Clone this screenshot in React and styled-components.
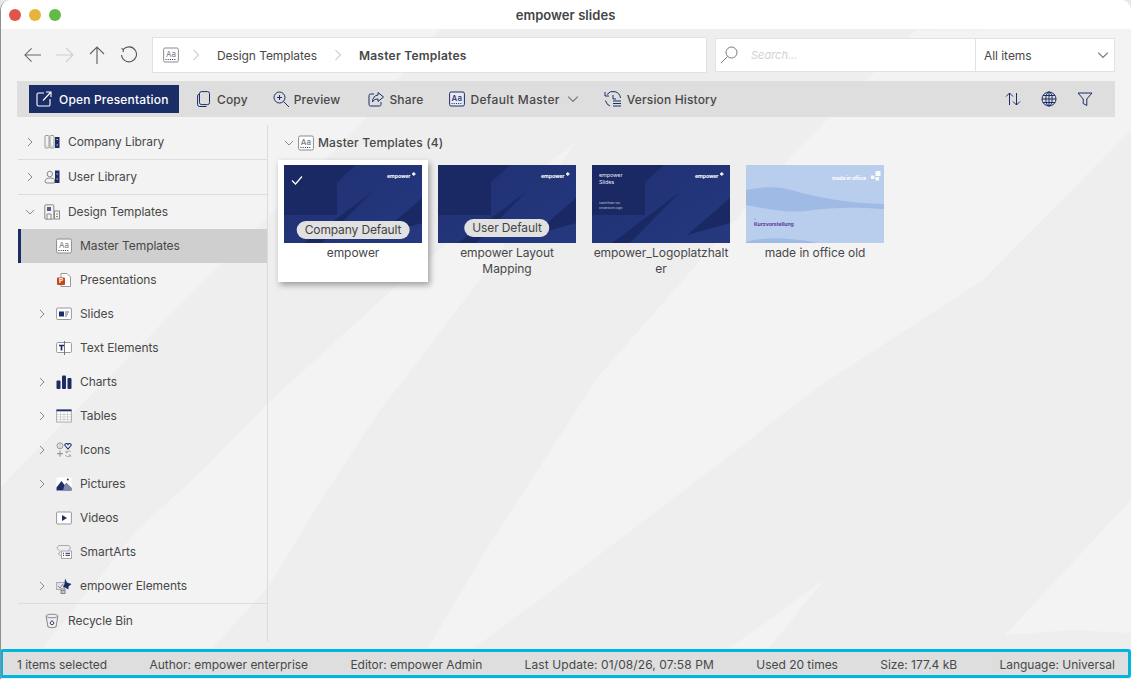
import React from "react";
import styled, { createGlobalStyle } from "styled-components";

const Global = createGlobalStyle`
  html, body { margin: 0; padding: 0; background: #e8e6e6; }
  * { box-sizing: border-box; }
  body { font-family: Inter, "Noto Sans", "Liberation Sans", sans-serif; font-size: 12px; color: #444; overflow: hidden; }
`;

const NAVY = "#1b2d66";

const Win = styled.div`
  position: relative; width: 1131px; height: 679px; display: flex; flex-direction: column;
  overflow: hidden; background: #eeeeee; border-radius: 10px 10px 0 0; border-left: 1px solid #8f8f8f;
`;
const Backdrop = styled.svg`position: absolute; left: -1px; top: 0; width: 1131px; height: 679px; pointer-events: none;`;
const TitleBar = styled.div`
  position: relative; height: 29px; flex: none; background: #fff; display: flex; align-items: center; justify-content: center;
  font-weight: 600; font-size: 13px; letter-spacing: 0.05px; color: #444; padding-right: 1px;
`;
const Lights = styled.div`position: absolute; left: 8px; top: 9px; display: flex; gap: 8px;`;
const Light = styled.span`width: 12px; height: 12px; border-radius: 50%; background: ${p => p.$c};`;

const NavRow = styled.div`position: relative; height: 52px; flex: none; display: flex; align-items: flex-start; padding: 8px 16px 0 23px;`;
const NavIcons = styled.div`width: 128px; height: 36px; flex: none; display: flex; align-items: center; gap: 15px;`;
const Crumbs = styled.div`
  width: 555px; height: 36px; flex: none; background: #fff; border: 1px solid #e2e2e2; display: flex; align-items: center; padding-left: 10px;
`;
const CrumbSep = styled.svg`width: 8px; height: 12px; margin: 0 ${p => p.$r}px 0 ${p => p.$l}px; flex: none;`;
const Crumb = styled.span`font-weight: ${p => p.$bold ? 600 : 400}; color: #484848; letter-spacing: ${p => p.$bold ? "0.25px" : "-0.08px"};`;
const SearchBox = styled.div`
  width: 400px; height: 34px; margin: 1px 0 0 8px; flex: none; background: #fff; border: 1px solid #e2e2e2; display: flex; align-items: center;
`;
const SearchIcon = styled.svg`width: 18px; height: 18px; margin-left: 4px; flex: none;`;
const SearchInput = styled.span`width: 237px; padding-left: 13px; font-style: italic; color: #d2d2d2; font-size: 11px;`;
const Select = styled.div`
  flex: 1; height: 100%; border-left: 1px solid #e2e2e2; display: flex; align-items: center; justify-content: space-between; padding: 0 5px 0 8px; color: #484848; letter-spacing: -0.05px;
`;

const Toolbar = styled.div`
  position: relative; height: 36px; margin: 0 16px 8px 16px; flex: none; background: #dedede; display: flex; align-items: center; padding: 0 22px 0 12px; gap: 26px;
`;
const PrimaryBtn = styled.button`
  width: 150px; height: 28px; margin-right: -8px; border: 0; border-radius: 0; background: ${NAVY}; color: #fff; font: 500 12px Inter, sans-serif; letter-spacing: 0.18px;
  display: flex; align-items: center; gap: 7px; padding: 0 0 0 7px;
`;
const ToolItem = styled.div`
  display: flex; align-items: center; gap: ${p => p.$gap || 5}px; margin-left: ${p => p.$ml || 0}px;
  font-weight: 500; color: #484848; letter-spacing: ${p => p.$ls || 0.15}px;
`;
const ToolChevron = styled.span`display: flex; margin-left: 2px;`;
const Spacer = styled.div`flex: 1;`;
const ToolIcons = styled.div`display: flex; gap: 20px; align-items: center;`;

const Body = styled.div`position: relative; flex: 1; min-height: 0; display: flex; padding-left: 16px;`;
const Sidebar = styled.nav`width: 251px; flex: none; height: 517px; border-right: 1px solid #dcdcdc;`;
const Row = styled.div`
  height: ${p => p.$h || 34}px; display: flex; align-items: center; padding-left: ${p => p.$nested ? 19 : 7}px; margin-left: 1px;
  background: ${p => p.$selected ? "#cfcfcf" : "transparent"};
  box-shadow: ${p => p.$selected ? `inset 3px 0 0 ${NAVY}` : "none"};
  border-bottom: ${p => p.$divider ? "1px solid #dcdcdc" : "0"};
  color: #484848; letter-spacing: -0.08px;
`;
const RowLabel = styled.span`margin-bottom: 2px;`;
const ChevronSlot = styled.span`width: 10px; flex: none; display: flex; justify-content: center; margin-right: 9px;`;
const IconSlot = styled.span`width: 16px; height: 16px; flex: none; margin-right: 8px; display: flex;`;

const Main = styled.main`flex: 1; min-width: 0; padding-left: 10px;`;
const GroupHead = styled.div`height: 35px; display: flex; align-items: center; padding: 0 0 0 6px; gap: 4px; font-weight: 500; color: #484848; letter-spacing: 0.15px;`;
const Cards = styled.div`display: flex; gap: 4px; align-items: flex-start;`;
const Card = styled.div`
  width: 150px; height: 122px; padding: 5px 6px 0; text-align: center; color: #484848; line-height: 16px; overflow-wrap: anywhere; letter-spacing: -0.05px;
  background: ${p => p.$selected ? "#fff" : "transparent"};
  box-shadow: ${p => p.$selected ? "2px 3px 6px rgba(0,0,0,.35)" : "none"};
`;
const Thumb = styled.div`position: relative; width: 138px; height: 78px; margin-bottom: 2px;`;
const ThumbArt = styled.svg`display: block; width: 138px; height: 78px;`;
const Badge = styled.span`
  position: absolute; left: 50%; bottom: ${p => p.$b}px; transform: translateX(-50%); height: 18px; line-height: 18px; padding: 0 8px;
  white-space: nowrap; border-radius: 9px; background: #e1e1e1; color: #444; letter-spacing: -0.12px;
`;
const Tick = styled.svg`position: absolute; left: 7px; top: 9px; width: 12px; height: 12px;`;

const Status = styled.footer`
  position: relative; height: 29px; flex: none; margin: 0 0 1px -1px; border: 3px solid #00b5df; border-radius: 3px; background: #dedede;
  display: flex; align-items: center; justify-content: space-between; padding: 1px 13px 0 14px; color: #484848; letter-spacing: -0.02px;
`;
const StatusWide = styled.span`letter-spacing: 0.1px;`;

const Chev = ({ open, color = "#8a8a8a", size = 10 }) => (
  <svg width={size} height={size} viewBox="0 0 10 10" fill="none" stroke={color} strokeWidth="1">
    <path d={open ? "M1 3l4 4 4-4" : "M3 1l4 4-4 4"} />
  </svg>
);

const Aa = ({ size = 16, navy }) => (
  <svg width={size} height={size} viewBox="0 0 16 16" fill="none">
    <rect x=".6" y="1" width="14.8" height="14" rx="1.5" stroke={navy ? NAVY : "#8b8b8b"} fill={navy ? "#e8ebf5" : "#fff"} />
    <text x="8" y="9.6" fontSize="8" textAnchor="middle" fill={navy ? NAVY : "#777"} fontFamily="Inter, sans-serif">Aa</text>
    <path d="M2.5 12.5h11" stroke={NAVY} strokeWidth="1.2" strokeDasharray="1 1.2" />
  </svg>
);

const Sv = ({ children, w = 16, h = 16, vb, ...r }) => (
  <svg width={w} height={h} viewBox={vb || `0 0 ${w} ${h}`} fill="none" {...r}>{children}</svg>
);

const icons = {
  company: <Sv><rect x="1" y="1.5" width="4" height="12.5" rx=".8" stroke="#999" /><rect x="6" y="1.5" width="4" height="12.5" rx=".8" stroke="#999" /><rect x="11" y="3" width="4.5" height="11" fill={NAVY} /><path d="M12.5 5.5h1.5M12.5 11h1.5M2 12h2M7 12h2" stroke="#ccd" /></Sv>,
  user: <Sv><circle cx="5.8" cy="5" r="2.7" stroke="#888" /><path d="M1 13c0-3 2-4 5-4s4 1 4.5 1.500V14H2z" stroke="#888" /><rect x="11" y="1.5" width="4.5" height="12.5" fill={NAVY} /><path d="M12.5 5h1.5M12.5 10h1.5" stroke="#ccd" /></Sv>,
  design: <Sv><rect x=".8" y=".8" width="9" height="14.4" rx="1" stroke="#888" /><rect x="3" y="3" width="4" height="4" fill={NAVY} opacity=".75" /><path d="M3 15v-5h4v5" stroke="#888" /><rect x="10.5" y="7" width="5" height="8" stroke="#888" /><path d="M12 10h2M12 12.500h2" stroke="#888" /></Sv>,
  ppt: <Sv><path d="M5 1.5h6l3.500 3.500v9.500H5z" fill="#fff" stroke="#999" /><rect x="1" y="5.5" width="8" height="7.5" rx="1" fill="#c4471d" /><text x="5" y="11.4" fontSize="6.5" fontWeight="700" fill="#fff" textAnchor="middle" fontFamily="Inter, sans-serif">P</text></Sv>,
  slides: <Sv><rect x=".6" y="2" width="14.8" height="11.5" rx="1" stroke="#999" fill="#fff" /><rect x="3" y="5.5" width="5" height="5" fill={NAVY} /><path d="M9 6h4M9 8h3M9 10h2" stroke="#668" /></Sv>,
  text: <Sv><rect x=".6" y="2.5" width="14.8" height="10" rx="1" stroke="#999" fill="#fff" /><path d="M3 5.5h5M5.500 5.5V10.5" stroke={NAVY} strokeWidth="1.7" /><path d="M8.5 1v14" stroke="#777" /></Sv>,
  charts: <Sv><rect x=".5" y="6.5" width="4" height="8.5" rx="1" fill={NAVY} /><rect x="6" y="1.5" width="4" height="13.5" rx="1" fill={NAVY} /><rect x="11.5" y="4" width="4" height="11" rx="1" fill={NAVY} /></Sv>,
  tables: <Sv><rect x=".6" y="2" width="14.8" height="12" stroke="#aaa" fill="#fff" /><rect x=".5" y="1.5" width="15" height="1.8" fill={NAVY} /><path d="M1 6.500h14M1 9h14M1 11.500h14M4.500 3.500v10M8 3.500v10M11.500 3.500v10" stroke="#c5c5c5" strokeWidth=".7" /></Sv>,
  icons: <Sv><circle cx="4" cy="3.8" r="3" stroke="#999" /><path d="M2.700 4.800q1.300 1 2.600 0M2.600 3h2.800" stroke="#999" strokeWidth=".6" /><path d="M12 7l-3-3.500c-1-1.500 2-3 3-1 1-2 4-.500 3 1z" stroke={NAVY} strokeWidth="1.1" /><path d="M1 11.700h6M4 8.700v6" stroke="#888" /><path d="M15 10a3 3 0 0 0-5 .500M9.200 13a3 3 0 0 0 5 .500M10 8.700v2h2M14.500 15v-2h-2" stroke="#999" strokeWidth=".8" /></Sv>,
  pictures: <Sv><rect x=".5" y="1.5" width="15" height="13" rx="1" fill="#fff" /><path d="M.5 14.500v-3L5.500 5l3 4 2-2 5 5v2.500z" fill={NAVY} /><path d="M8.500 9l2-2 5 5v2.500H7z" fill="#8089ad" /><circle cx="11.800" cy="3.500" r="1" fill={NAVY} /></Sv>,
  videos: <Sv><rect x=".6" y="2" width="14.8" height="12" rx="1" stroke="#999" fill="#fff" /><path d="M6 5l5 3-5 3z" fill={NAVY} /></Sv>,
  smart: <Sv><path d="M.8 4l2-2.500h10l2 2.500-3 2.500" stroke="#aaa" /><path d="M.8 4l3.500 3.500-2 2.500 3 2" stroke="#aaa" /><rect x="5.5" y="7" width="10" height="7.5" fill="#fff" stroke="#aaa" /><path d="M7 9.300h1M9.500 9.300h4.500M7 11.300h1M9.500 11.300h4.500" stroke={NAVY} /></Sv>,
  elements: <Sv><rect x=".6" y="4.5" width="7.5" height="7" stroke="#aaa" fill="#dfe2ee" /><path d="M2 8l2 2 3-4" stroke="#889" /><path d="M9 .500l2 4 4.500 1.500-3 2.500v3l-3.500-2-2-.500 1.500-3z" fill={NAVY} /><rect x="5" y="11" width="4" height="4.5" stroke="#888" fill="#fff" /><path d="M5 12.500h4M5 14h4" stroke="#888" /></Sv>,
  bin: <Sv><ellipse cx="8" cy="3" rx="6" ry="1.8" stroke="#888" /><path d="M2.200 3.500L4 14q4 1.500 8 0l1.800-10.500" stroke="#888" /><path d="M6 10l2-2.500 2 2.500-1 1.500H7z" stroke={NAVY} strokeWidth=".9" /></Sv>,
};

const tree = [
  { label: "Master Templates", icon: <Aa />, selected: true },
  { label: "Presentations", icon: icons.ppt },
  { label: "Slides", icon: icons.slides, chev: true },
  { label: "Text Elements", icon: icons.text },
  { label: "Charts", icon: icons.charts, chev: true },
  { label: "Tables", icon: icons.tables, chev: true },
  { label: "Icons", icon: icons.icons, chev: true },
  { label: "Pictures", icon: icons.pictures, chev: true },
  { label: "Videos", icon: icons.videos },
  { label: "SmartArts", icon: icons.smart },
];

const TreeRow = ({ label, icon, chev, open, nested, selected, divider, h }) => (
  <Row $nested={nested} $selected={selected} $divider={divider} $h={h}>
    <ChevronSlot>{chev && <Chev open={open} />}</ChevronSlot>
    <IconSlot>{icon}</IconSlot>
    <RowLabel>{label}</RowLabel>
  </Row>
);

const Logo = () => (
  <g>
    <text x="103" y="13" fontSize="5.2" fontWeight="700" fill="#fff" fontFamily="Inter, sans-serif">empower</text>
    <path d="M128 9h3.500M129.750 7.200v3.600" stroke="#fff" strokeWidth="1.3" />
  </g>
);

const DarkArt = ({ slides }) => (
  <ThumbArt viewBox="0 0 138 78">
    <defs>
      <linearGradient id={slides ? "g2" : "g1"} x1="0" y1="0" x2="1" y2="1">
        <stop offset="0" stopColor="#1f2f72" />
        <stop offset="1" stopColor="#26397f" />
      </linearGradient>
    </defs>
    <rect width="138" height="78" fill={`url(#${slides ? "g2" : "g1"})`} />
    <path d="M0 0H72L53 17V50H0z" fill="#1a2964" />
    <path d="M88 27L20 78H38z" fill="#1a2964" />
    <path d="M138 33L95 70L138 58z" fill="#1a2964" />
    <Logo />
    {slides && (
      <g fontFamily="Inter, sans-serif" fill="#e4e7f1">
        <text x="7" y="12" fontSize="5.4">empower</text>
        <text x="7" y="19" fontSize="5.4">Slides</text>
        <text x="7" y="38.500" fontSize="2.700" opacity=".75">Masterfelder und</text>
        <text x="7" y="43.500" fontSize="2.700" opacity=".75">Dynamische Logos</text>
      </g>
    )}
  </ThumbArt>
);

const LightArt = () => (
  <ThumbArt viewBox="0 0 138 78">
    <rect width="138" height="78" fill="#b9cdec" />
    <path d="M0 25C15 22 30 21 45 25C75 34 105 38 138 39V44C110 42 85 42 60 46C40 48 20 44 0 40z" fill="#9fbae4" />
    <path d="M0 77C15 72 40 72 72 78H0z" fill="#9fbae4" />
    <text x="86" y="15" fontSize="5" fontWeight="700" fill="#fff" fontFamily="Inter, sans-serif">made in office</text>
    <path d="M125 10.500h3.500v3.500h-3.500zM129.500 6h5v5h-5zM129.500 12h3.500v3.500h-3.500z" fill="#fff" opacity=".9" />
    <text x="8" y="61" fontSize="5.2" fontWeight="700" fill="#5c3a9e" fontFamily="Inter, sans-serif">Kurzvorstellung</text>
    <circle cx="9" cy="54" r=".6" fill="#7f8fc0" />
  </ThumbArt>
);

const ToolSvg = ({ children, w = 16, h = 16 }) => (
  <svg width={w} height={h} viewBox={`0 0 ${w} ${h}`} fill="none" stroke={NAVY} strokeWidth="1">{children}</svg>
);

export default function App() {
  return (
    <>
      <Global />
      <Win>
        <Backdrop viewBox="0 0 1131 679">
          <g fill="#f3f3f3">
            <path d="M0 29H440L360 125L270 215L185 300L12 475L0 488z" />
            <path d="M43 648L137 530L200 473L268 403L392 290L483 212L575 143L480 280L378 413L323 497L268 587L213 648z" />
            <path d="M428 648L488 547L598 377L683 280L792 155L916 30L1131 29V130L983 280L818 387L681 493L543 597L474 648z" />
            <path d="M824 580L730 648H769z" />
            <path d="M1131 500L1005 635L1072 630L1131 633z" />
          </g>
        </Backdrop>
        <TitleBar>
          <Lights>
            <Light $c="#e0544c" /><Light $c="#e8b33b" /><Light $c="#62bb46" />
          </Lights>
          empower slides
        </TitleBar>
        <NavRow>
          <NavIcons>
            <Sv w={17} h={18} vb="0 0 18 18"><path d="M1 9H18M8 2L1 9l7 7" stroke="#666" strokeWidth="1.1" /></Sv>
            <Sv w={18} h={18}><path d="M0 9H17M10 2l7 7-7 7" stroke="#cfcfcf" strokeWidth="1.1" /></Sv>
            <Sv w={16} h={18}><path d="M8 18V1M1 8l7-7 7 7" stroke="#666" strokeWidth="1.2" /></Sv>
            <Sv w={18} h={18}><path d="M3.500 3.200A7.500 7.500 0 1 1 1.500 9M1.500 2.500L3.500 3.500 3 6.200" stroke="#555" strokeWidth="1.1" /></Sv>
          </NavIcons>
          <Crumbs>
            <Aa />
            <CrumbSep $l={13} $r={17} viewBox="0 0 8 12"><path d="M1.500 1l5 5-5 5" fill="none" stroke="#b5b5b5" /></CrumbSep>
            <Crumb>Design Templates</Crumb>
            <CrumbSep $l={17} $r={17} viewBox="0 0 8 12"><path d="M1.500 1l5 5-5 5" fill="none" stroke="#b5b5b5" /></CrumbSep>
            <Crumb $bold>Master Templates</Crumb>
          </Crumbs>
          <SearchBox>
            <SearchIcon viewBox="0 0 18 18"><circle cx="11.500" cy="6.500" r="5.500" fill="none" stroke="#777" /><path d="M7.500 10.500L1 17" stroke="#777" /></SearchIcon>
            <SearchInput>Search...</SearchInput>
            <Select>
              All items
              <Chev open size={12} color="#777" />
            </Select>
          </SearchBox>
        </NavRow>
        <Toolbar>
          <PrimaryBtn>
            <svg width="16" height="16" viewBox="0 0 16 16" fill="none" stroke="#fff" strokeWidth="1.1">
              <path d="M8 2H2.500A1.500 1.500 0 0 0 1 3.500v10A1.500 1.500 0 0 0 2.500 15h10a1.500 1.500 0 0 0 1.500-1.500V8M7 9.500L15 1M10 1h5v5" />
            </svg>
            Open Presentation
          </PrimaryBtn>
          <ToolItem $gap={7}>
            <ToolSvg w={13}><rect x="2.500" y=".6" width="10" height="13" rx="2" /><path d="M2.500 3A2 2 0 0 0 .6 5v8.500A2 2 0 0 0 2.500 15.500h7" /></ToolSvg>
            Copy
          </ToolItem>
          <ToolItem $ml={-1}>
            <ToolSvg><circle cx="6.500" cy="6.500" r="5.500" /><path d="M10.500 10.500L16 16M6.500 4v5M4 6.500h5" /></ToolSvg>
            Preview
          </ToolItem>
          <ToolItem $ml={2}>
            <ToolSvg><path d="M6 3H2.500A1.500 1.500 0 0 0 1 4.500v9A1.500 1.500 0 0 0 2.500 15h9a1.500 1.500 0 0 0 1.500-1.500V11" /><path d="M10 1.500L15.500 6 10 10.500V8C7 8 5.500 9 4.500 11 4.500 7 6.500 4.500 10 4z" /></ToolSvg>
            Share
          </ToolItem>
          <ToolItem $ls={0.35}>
            <Aa navy />
            Default Master
            <ToolChevron><Chev open size={12} color="#777" /></ToolChevron>
          </ToolItem>
          <ToolItem $ml={-1}>
            <ToolSvg w={18} h={18}><path d="M3 4.500A7.500 7.500 0 0 1 16.500 8M1 2v4h4M1.500 10.500A7.500 7.500 0 0 0 6 16M9 5v4h3M9 11h8M9 13.500h8M9 16h8" /></ToolSvg>
            Version History
          </ToolItem>
          <Spacer />
          <ToolIcons>
            <ToolSvg><path d="M4.500 14V2M1 5.500L4.500 2 8 5.500M11.500 2v12M8 10.500l3.500 3.500 3.500-3.500" /></ToolSvg>
            <ToolSvg><circle cx="8" cy="8" r="7" /><ellipse cx="8" cy="8" rx="3.200" ry="7" /><path d="M8 1v14M1 8h14M2 4.500h12M2 11.500h12" /></ToolSvg>
            <ToolSvg><path d="M1 2h14L9.800 8v6.500L6.200 12.500V8z" /></ToolSvg>
          </ToolIcons>
        </Toolbar>
        <Body>
          <Sidebar>
            <TreeRow label="Company Library" icon={icons.company} chev divider h={35} />
            <TreeRow label="User Library" icon={icons.user} chev divider h={35} />
            <TreeRow label="Design Templates" icon={icons.design} chev open />
            {tree.map(t => <TreeRow key={t.label} {...t} nested />)}
            <TreeRow label="empower Elements" icon={icons.elements} chev nested divider h={35} />
            <TreeRow label="Recycle Bin" icon={icons.bin} />
          </Sidebar>
          <Main>
            <GroupHead>
              <Chev open size={10} />
              <Aa />
              Master Templates (4)
            </GroupHead>
            <Cards>
              <Card $selected>
                <Thumb>
                  <DarkArt />
                  <Tick viewBox="0 0 12 12"><path d="M1 6.500L4.500 10 11 2.500" fill="none" stroke="#fff" strokeWidth="1.2" /></Tick>
                  <Badge $b={4}>Company Default</Badge>
                </Thumb>
                empower
              </Card>
              <Card>
                <Thumb>
                  <DarkArt />
                  <Badge $b={6}>User Default</Badge>
                </Thumb>
                empower Layout Mapping
              </Card>
              <Card>
                <Thumb><DarkArt slides /></Thumb>
                empower_Logoplatzhalter
              </Card>
              <Card>
                <Thumb><LightArt /></Thumb>
                made in office old
              </Card>
            </Cards>
          </Main>
        </Body>
        <Status>
          <span>1 items selected</span>
          <span>Author: empower enterprise</span>
          <span>Editor: empower Admin</span>
          <StatusWide>Last Update: 01/08/26, 07:58 PM</StatusWide>
          <span>Used 20 times</span>
          <span>Size: 177.4 kB</span>
          <span>Language: Universal</span>
        </Status>
      </Win>
    </>
  );
}
